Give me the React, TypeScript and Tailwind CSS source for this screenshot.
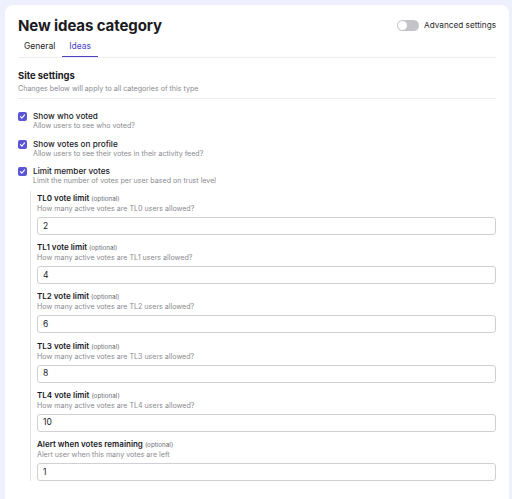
import React from 'react';

const limits = [
  { label: 'TL0 vote limit', help: 'How many active votes are TL0 users allowed?', value: '2' },
  { label: 'TL1 vote limit', help: 'How many active votes are TL1 users allowed?', value: '4' },
  { label: 'TL2 vote limit', help: 'How many active votes are TL2 users allowed?', value: '6' },
  { label: 'TL3 vote limit', help: 'How many active votes are TL3 users allowed?', value: '8' },
  { label: 'TL4 vote limit', help: 'How many active votes are TL4 users allowed?', value: '10' },
  { label: 'Alert when votes remaining', help: 'Alert user when this many votes are left', value: '1' },
];

const toggles = [
  { label: 'Show who voted', help: 'Allow users to see who voted?' },
  { label: 'Show votes on profile', help: 'Allow users to see their votes in their activity feed?' },
  { label: 'Limit member votes', help: 'Limit the number of votes per user based on trust level' },
];

function Check() {
  return (
    <span className="mt-[1px] flex h-[9px] w-[9px] shrink-0 items-center justify-center rounded-[2px] bg-[#5a54d6]">
      <svg viewBox="0 0 10 10" className="h-[7px] w-[7px]">
        <path d="M2 5.2 4.1 7.2 8 2.8" fill="none" stroke="white" strokeWidth="1.6" strokeLinecap="round" strokeLinejoin="round" />
      </svg>
    </span>
  );
}

export default function App() {
  return (
    <div className="h-[499px] overflow-hidden bg-[#eef0fd] pl-[5px] pr-[3px] pt-[5px] font-['Inter',sans-serif] text-[#1b1b1f]">
      <div className="min-h-[520px] rounded-[8px] bg-white px-[13px] pt-[11px]">
        {/* Header */}
        <div className="flex items-start justify-between">
          <h1 className="text-[15px] font-bold leading-[20px] tracking-[-0.1px]">New ideas category</h1>
          <div className="mt-[3px] flex items-center gap-[5px]">
            <span className="flex h-[11px] w-[22px] items-center rounded-full bg-[#c4c4c8] px-[1px]">
              <span className="h-[9px] w-[9px] rounded-full bg-white" />
            </span>
            <span className="text-[8.2px] leading-[12px] text-[#2a2a2e]">Advanced settings</span>
          </div>
        </div>

        {/* Tabs */}
        <div className="mt-[1px] flex border-b border-[#ececef] text-[8.5px] leading-[12px]">
          <span className="px-[6px] pb-[4px] pt-[3px] text-[#222226]">General</span>
          <span className="ml-[1px] border-b-[1.5px] border-[#4b46c8] px-[7px] pb-[4px] pt-[3px] text-[#4b46c8]">Ideas</span>
        </div>

        {/* Site settings */}
        <div className="mt-[11px] border-b border-[#ececef] pb-[4px]">
          <h2 className="text-[9.4px] font-bold leading-[13px]">Site settings</h2>
          <p className="mt-[2px] text-[7.1px] leading-[10px] text-[#8a8a90]">Changes below will apply to all categories of this type</p>
        </div>

        <div className="mt-[12px] flex flex-col gap-[7.5px]">
          {toggles.map((t) => (
            <div key={t.label} className="flex gap-[6px]">
              <Check />
              <div className="flex flex-col">
                <span className="text-[8.2px] font-medium leading-[10px]">{t.label}</span>
                <span className="text-[7.1px] leading-[10px] text-[#8a8a90]">{t.help}</span>
              </div>
            </div>
          ))}
        </div>

        {/* Nested limits */}
        <div className="ml-[12px] mt-[5px] flex flex-col gap-[7.2px] border-l-[1.5px] border-[#e2e2e6] pl-[6px] pt-[2px]">
          {limits.map((l) => (
            <div key={l.label} className="flex flex-col">
              <span className="text-[8px] font-semibold leading-[10px]">
                {l.label} <span className="text-[6.3px] font-normal text-[#6b6b72]">(optional)</span>
              </span>
              <span className="text-[7.1px] leading-[10px] text-[#8a8a90]">{l.help}</span>
              <div className="mt-[3px] flex h-[18px] items-center rounded-[3px] border border-[#cfcfd4] px-[5px] text-[8.5px]">
                {l.value}
              </div>
            </div>
          ))}
        </div>
      </div>
    </div>
  );
}
